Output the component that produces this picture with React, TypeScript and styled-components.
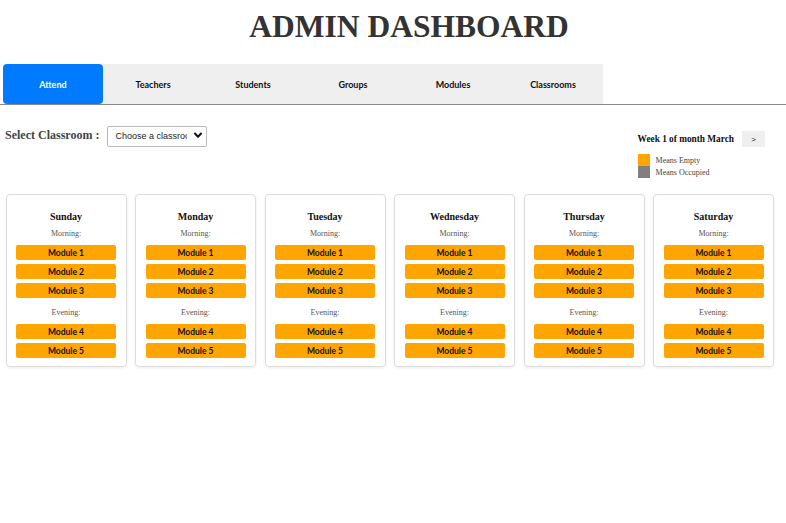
import React from "react";
import styled, { createGlobalStyle } from "styled-components";

const Global = createGlobalStyle`
  html, body { margin: 0; padding: 0; background: #fff; }
  body { font-family: "Liberation Serif", "Times New Roman", serif; color: #222; }
  * { box-sizing: border-box; }
`;

const Page = styled.div`
  width: 786px;
  min-height: 523px;
  display: flex;
  flex-direction: column;
`;

const Title = styled.h1`
  margin: 9px 0 19px;
  padding-left: 32px;
  text-align: center;
  font-family: "Liberation Serif", serif;
  font-weight: 700;
  font-size: 31.5px;
  line-height: 36px;
  color: #333;
`;

const TabBar = styled.nav`
  display: flex;
  padding-left: 3px;
  border-bottom: 1px solid #888;
`;

const Tab = styled.div<{ $active?: boolean }>`
  width: 100px;
  height: 40px;
  display: flex;
  align-items: center;
  justify-content: center;
  font-family: "Lato", "Noto Sans", sans-serif;
  font-weight: 700;
  font-size: 9px;
  color: ${(p) => (p.$active ? "#fff" : "#111")};
  background: ${(p) => (p.$active ? "#007bff" : "#efefef")};
  border-radius: ${(p) => (p.$active ? "4px" : "0")};
`;

const Toolbar = styled.div`
  display: flex;
  justify-content: space-between;
  align-items: flex-start;
  padding: 20px 21px 0 5px;
`;

const SelectGroup = styled.div`
  display: flex;
  align-items: center;
  gap: 8px;
`;

const Label = styled.label`
  font-family: "Liberation Serif", serif;
  font-weight: 700;
  font-size: 12px;
  color: #444;
`;

const SelectWrap = styled.div`
  position: relative;
  width: 100px;
  height: 21px;
`;

const Select = styled.select`
  appearance: none;
  -webkit-appearance: none;
  width: 100%;
  height: 100%;
  font-family: "Liberation Sans", Arial, sans-serif;
  font-size: 9px;
  color: #222;
  background: #fff;
  border: 1px solid #bbb;
  border-radius: 2px;
  padding: 0 19px 0 7px;
`;

const Chevron = styled.svg`
  position: absolute;
  right: 5px;
  top: 7px;
  width: 8px;
  height: 7px;
  pointer-events: none;
`;

const WeekGroup = styled.div`
  display: flex;
  flex-direction: column;
  margin-top: 6px;
`;

const WeekRow = styled.div`
  display: flex;
  align-items: center;
  gap: 8px;
`;

const WeekText = styled.span`
  font-family: "Liberation Serif", serif;
  font-weight: 700;
  font-size: 9.3px;
  color: #111;
`;

const NextButton = styled.button`
  width: 23px;
  height: 16px;
  padding: 0;
  border: none;
  background: #efefef;
  font-family: "Liberation Sans", Arial, sans-serif;
  font-size: 8px;
  color: #222;
`;

const Legend = styled.div`
  display: flex;
  flex-direction: column;
  margin-top: 7px;
`;

const LegendItem = styled.div`
  display: flex;
  align-items: center;
  gap: 6px;
  height: 12px;
  font-family: "Liberation Serif", serif;
  font-size: 8px;
  color: #444;
`;

const Swatch = styled.span<{ $color: string }>`
  width: 12px;
  height: 12px;
  background: ${(p) => p.$color};
`;

const Cards = styled.div`
  display: flex;
  gap: 8.5px;
  padding-left: 5.5px;
  margin-top: 16px;
`;

const Card = styled.div`
  width: 121px;
  padding: 16px 10px 8px;
  border: 1px solid #ddd;
  border-radius: 4px;
  box-shadow: 0 1px 3px rgba(0, 0, 0, 0.08);
  display: flex;
  flex-direction: column;
  align-items: center;
`;

const Day = styled.h3`
  margin: 0 0 6px;
  font-family: "Liberation Serif", serif;
  font-weight: 700;
  font-size: 10px;
  line-height: 12px;
  color: #111;
`;

const Period = styled.div<{ $top?: number }>`
  margin-top: ${(p) => p.$top ?? 0}px;
  margin-bottom: 6px;
  font-family: "Liberation Serif", serif;
  font-size: 8px;
  line-height: 10px;
  color: #555;
`;

const Slots = styled.div`
  display: flex;
  flex-direction: column;
  gap: 4px;
`;

const Module = styled.div`
  width: 100px;
  height: 15px;
  display: flex;
  align-items: center;
  justify-content: center;
  background: #ffa500;
  border-radius: 2px;
  font-family: "Lato", "Noto Sans", sans-serif;
  font-weight: 700;
  font-size: 8.5px;
  color: #111;
`;

const tabs = ["Attend", "Teachers", "Students", "Groups", "Modules", "Classrooms"];
const days = ["Sunday", "Monday", "Tuesday", "Wednesday", "Thursday", "Saturday"];

export default function App() {
  return (
    <Page>
      <Global />
      <Title>ADMIN DASHBOARD</Title>
      <TabBar>
        {tabs.map((t, i) => (
          <Tab key={t} $active={i === 0}>
            {t}
          </Tab>
        ))}
      </TabBar>
      <Toolbar>
        <SelectGroup>
          <Label>Select Classroom :</Label>
          <SelectWrap>
            <Select defaultValue="">
              <option value="">Choose a classroom</option>
            </Select>
            <Chevron viewBox="0 0 8 7">
              <path d="M1 1.5 L4 4.8 L7 1.5" fill="none" stroke="#111" strokeWidth="2" strokeLinecap="round" strokeLinejoin="round" />
            </Chevron>
          </SelectWrap>
        </SelectGroup>
        <WeekGroup>
          <WeekRow>
            <WeekText>Week 1 of month March</WeekText>
            <NextButton>&gt;</NextButton>
          </WeekRow>
          <Legend>
            <LegendItem>
              <Swatch $color="#ffa500" />
              Means Empty
            </LegendItem>
            <LegendItem>
              <Swatch $color="#808080" />
              Means Occupied
            </LegendItem>
          </Legend>
        </WeekGroup>
      </Toolbar>
      <Cards>
        {days.map((d) => (
          <Card key={d}>
            <Day>{d}</Day>
            <Period>Morning:</Period>
            <Slots>
              <Module>Module 1</Module>
              <Module>Module 2</Module>
              <Module>Module 3</Module>
            </Slots>
            <Period $top={10}>Evening:</Period>
            <Slots>
              <Module>Module 4</Module>
              <Module>Module 5</Module>
            </Slots>
          </Card>
        ))}
      </Cards>
    </Page>
  );
}
